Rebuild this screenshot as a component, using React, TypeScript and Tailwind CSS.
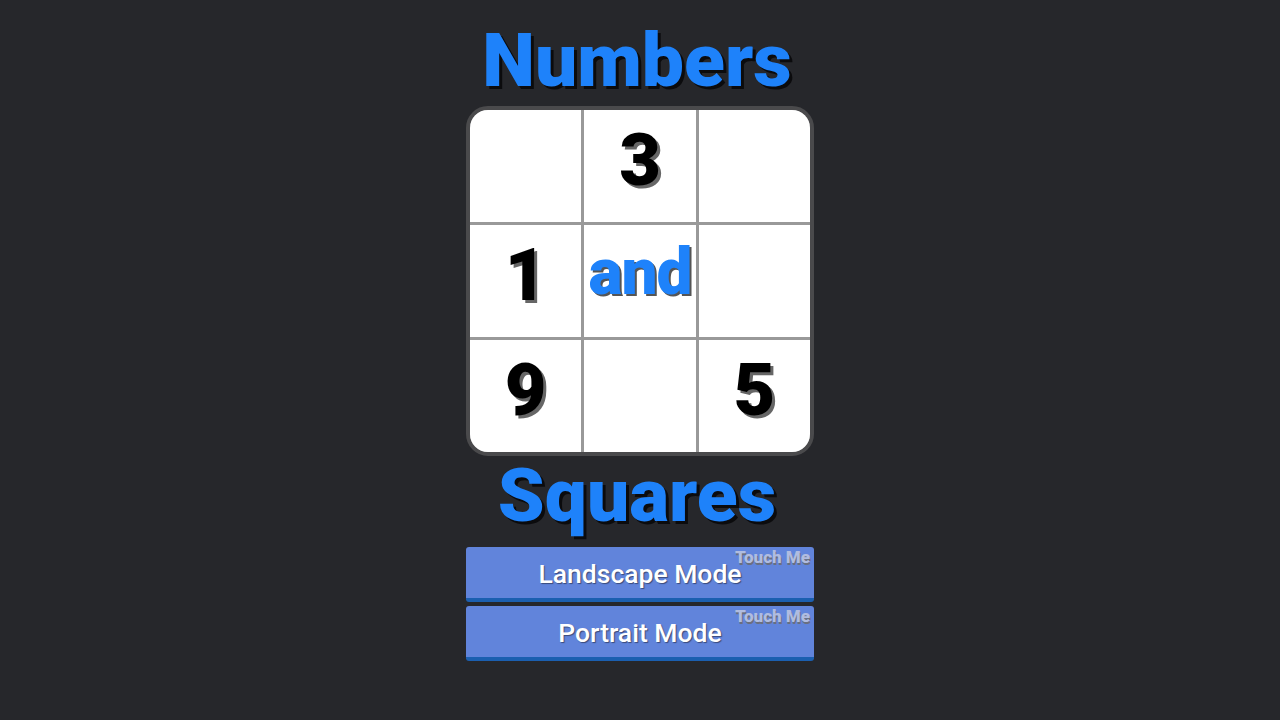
import React from 'react';

const cells: { label?: string; blue?: boolean }[] = [
  {},
  { label: '3' },
  {},
  { label: '1' },
  { label: 'and', blue: true },
  {},
  { label: '9' },
  {},
  { label: '5' },
];

const headingClass =
  "mr-[6px] font-['Roboto',sans-serif] text-[75px] font-black leading-none text-[#1e82fa] [text-shadow:3px_3px_0_#0b0b0d]";

function ModeButton({ label }: { label: string }) {
  return (
    <button className="relative flex h-[55px] w-[348px] items-center justify-center rounded-[3px] border-b-4 border-[#1b5fb0] bg-[#6184db] pt-[2px] text-white">
      <span className="absolute right-[4px] top-[2px] font-['Roboto',sans-serif] text-[17px] font-black leading-none text-[#b0bce0] [text-shadow:1px_2px_0_#6a6f80]">
        Touch Me
      </span>
      <span className="font-['Roboto',sans-serif] text-[26.5px] font-medium [text-shadow:1px_1px_1px_#3a4a7a]">
        {label}
      </span>
    </button>
  );
}

export default function App() {
  return (
    <div className="flex min-h-screen flex-col items-center bg-[#26272b] pt-[23px]">
      <h1 className={headingClass}>Numbers</h1>

      <div className="mt-[8px] w-[348px] overflow-hidden rounded-[22px] border-4 border-[#4a4a4c] bg-[#999999]">
        <div className="grid grid-cols-3 gap-[3px]">
          {cells.map((cell, i) => (
            <div key={i} className="flex h-[112px] items-center justify-center bg-white pb-[10px]">
              {cell.label && (
                <span
                  className={
                    cell.blue
                      ? "relative top-[-3px] font-['Roboto',sans-serif] text-[64px] font-black leading-none tracking-[-1px] text-[#1e82fa] [text-shadow:2px_2px_0_#555]"
                      : "font-['Roboto',sans-serif] text-[72px] font-black leading-none text-black [text-shadow:3px_3px_0_#666]"
                  }
                >
                  {cell.label}
                </span>
              )}
            </div>
          ))}
        </div>
      </div>

      <h2 className={`${headingClass} mt-[2px]`}>Squares</h2>

      <div className="mt-[14px] flex flex-col gap-[4px]">
        <ModeButton label="Landscape Mode" />
        <ModeButton label="Portrait Mode" />
      </div>
    </div>
  );
}
